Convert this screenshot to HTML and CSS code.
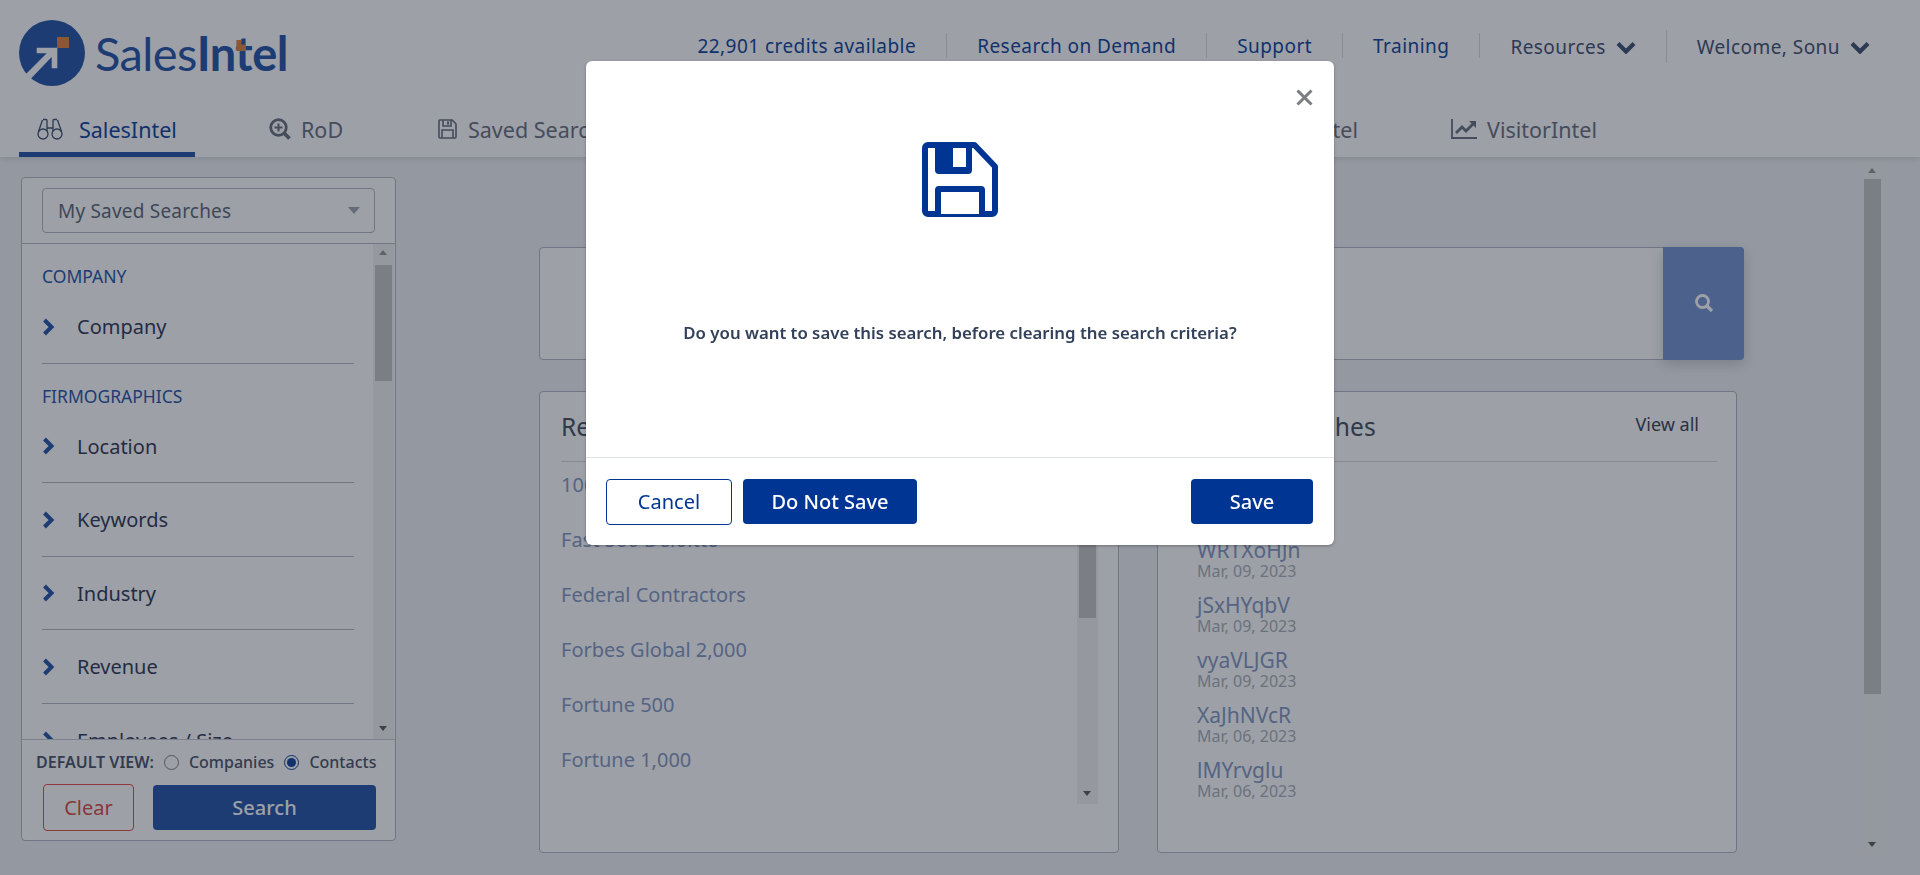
FILE: index.html
```html
<!DOCTYPE html>
<html lang="en">
<head>
    <meta charset="UTF-8">
    <meta name="viewport" content="width=device-width, initial-scale=1.0">
    <title>SalesIntel</title>
    <link rel="stylesheet" href="styles.css">
</head>
<body>
    <!-- header -->
    <header class="header">
        <div class="top-row">
            <a class="logo">
                <svg class="logo-mark" width="66" height="66" viewBox="0 0 66 66">
                    <circle cx="33" cy="33" r="33" fill="#164aa1"/>
                    <rect x="38" y="17" width="12" height="11" fill="#e07a2c"/>
                    <polygon fill="#fff" points="17.7,27.7 38.3,27.7 38.3,48.3 32.7,48.3 32.7,37 11.7,58.7 7,54 27.7,33.3 17.7,33.3"/>
                </svg>
                <span class="logo-text">Sales<b>In<span class="logo-t">t</span>el</b></span>
            </a>
            <nav class="top-nav">
                <a class="top-link">22,901 credits available</a>
                <a class="top-link">Research on Demand</a>
                <a class="top-link">Support</a>
                <a class="top-link">Training</a>
                <a class="top-link top-link-dark top-link-tall">Resources
                    <svg class="nav-caret" width="20" height="13" viewBox="0 0 20 13"><path d="M2 2.500l8 8 8-8" fill="none" stroke="currentColor" stroke-width="4.200"/></svg>
                </a>
                <a class="top-link top-link-dark top-link-tall">Welcome, Sonu
                    <svg class="nav-caret" width="20" height="13" viewBox="0 0 20 13"><path d="M2 2.500l8 8 8-8" fill="none" stroke="currentColor" stroke-width="4.200"/></svg>
                </a>
            </nav>
        </div>
        <div class="tabs">
            <a class="tab tab-active">
                <svg width="26" height="22" viewBox="0 0 26 22" fill="none" stroke="currentColor" stroke-width="1.300">
                    <path d="M6 1.500h3a1 1 0 0 1 1 1V13M20 1.500h-3a1 1 0 0 0-1 1V13M5.500 2L1.500 13.500M20.500 2l4 11.500M10 10h6"/>
                    <circle cx="6" cy="16" r="5"/><circle cx="20" cy="16" r="5"/>
                </svg>
                SalesIntel
            </a>
            <a class="tab tab-rod">
                <svg width="22" height="22" viewBox="0 0 22 22" fill="none" stroke="currentColor" stroke-width="2.800">
                    <circle cx="9.500" cy="9.500" r="7.800"/><path d="M15 15l5.500 5.500" stroke-width="3.800"/><path d="M9.500 5.500v8M5.500 9.500h8" stroke-width="2"/>
                </svg>
                RoD
            </a>
            <a class="tab tab-saved">
                <svg width="19" height="20" viewBox="0 0 19 20" fill="none" stroke="currentColor" stroke-width="1.600">
                    <path d="M1.800 1h12.400L18 5v13a1 1 0 0 1-1 1H2a1 1 0 0 1-1-1V2a1 1 0 0 1 .8-1z"/>
                    <path d="M5 1v6h8V1M4 19v-8h11v8"/><path d="M10 2.500v3" stroke-width="2"/>
                </svg>
                Saved Searches
            </a>
            <a class="tab tab-hidden">TechIntel</a>
            <a class="tab tab-visitor">
                <svg width="26" height="20" viewBox="0 0 26 20" fill="none" stroke="currentColor" stroke-width="2">
                    <path d="M1 0v19h25" stroke-width="1.800"/><path d="M5 14l6-6 4 4 8-8" stroke-width="2.800"/><path d="M18 2h7v7z" fill="currentColor" stroke="none"/>
                </svg>
                VisitorIntel
            </a>
        </div>
    </header>

    <div class="page">
        <!-- left filters -->
        <aside class="sidebar">
            <div class="sidebar-top">
                <div class="select">My Saved Searches<span class="select-arrow"></span></div>
            </div>
            <div class="sidebar-body">
                <div class="filters">
                    <div class="filter-label">COMPANY</div>
                    <div class="filter"><svg class="chev" width="13" height="18" viewBox="0 0 13 18"><path d="M2.500 2l7 7-7 7" fill="none" stroke="currentColor" stroke-width="4"/></svg>Company</div>
                    <div class="filter-label">FIRMOGRAPHICS</div>
                    <div class="filter"><svg class="chev" width="13" height="18" viewBox="0 0 13 18"><path d="M2.500 2l7 7-7 7" fill="none" stroke="currentColor" stroke-width="4"/></svg>Location</div>
                    <div class="filter"><svg class="chev" width="13" height="18" viewBox="0 0 13 18"><path d="M2.500 2l7 7-7 7" fill="none" stroke="currentColor" stroke-width="4"/></svg>Keywords</div>
                    <div class="filter"><svg class="chev" width="13" height="18" viewBox="0 0 13 18"><path d="M2.500 2l7 7-7 7" fill="none" stroke="currentColor" stroke-width="4"/></svg>Industry</div>
                    <div class="filter"><svg class="chev" width="13" height="18" viewBox="0 0 13 18"><path d="M2.500 2l7 7-7 7" fill="none" stroke="currentColor" stroke-width="4"/></svg>Revenue</div>
                    <div class="filter"><svg class="chev" width="13" height="18" viewBox="0 0 13 18"><path d="M2.500 2l7 7-7 7" fill="none" stroke="currentColor" stroke-width="4"/></svg>Employees / Size</div>
                </div>
                <div class="scrollbar">
                    <span class="arrow-up"></span>
                    <span class="thumb thumb-side"></span>
                    <span class="arrow-down"></span>
                </div>
            </div>
            <div class="sidebar-foot">
                <div class="default-view">
                    <span class="default-label">DEFAULT VIEW:</span>
                    <label class="radio"><input type="radio" name="view">Companies</label>
                    <label class="radio"><input type="radio" name="view" checked>Contacts</label>
                </div>
                <div class="foot-btns">
                    <button class="btn-clear">Clear</button>
                    <button class="btn-search">Search</button>
                </div>
            </div>
        </aside>

        <!-- main content -->
        <main class="content">
            <div class="search-box">
                <div class="search-input"></div>
                <button class="search-go">
                    <svg width="20" height="20" viewBox="0 0 20 20" fill="none" stroke="#fff" stroke-width="2.800"><circle cx="8.500" cy="8.500" r="6"/><path d="M13 13l5 5" stroke-width="3.400"/></svg>
                </button>
            </div>
            <div class="cards">
                <section class="card">
                    <div class="card-head"><h2>Recommended Lists</h2></div>
                    <div class="card-row">
                        <ul class="list">
                            <li>100 Best Companies</li>
                            <li>Fast 500 Deloitte</li>
                            <li>Federal Contractors</li>
                            <li>Forbes Global 2,000</li>
                            <li>Fortune 500</li>
                            <li>Fortune 1,000</li>
                        </ul>
                        <div class="scrollbar">
                            <span class="arrow-up"></span>
                            <span class="thumb thumb-list"></span>
                            <span class="arrow-down"></span>
                        </div>
                    </div>
                </section>
                <section class="card">
                    <div class="card-head"><h2>Saved Searches</h2><a class="view-all">View all</a></div>
                    <ul class="recent">
                        <li><a>pKtRmZsA</a><span>Mar, 09, 2023</span></li>
                        <li><a>WRTXoHJn</a><span>Mar, 09, 2023</span></li>
                        <li><a>jSxHYqbV</a><span>Mar, 09, 2023</span></li>
                        <li><a>vyaVLJGR</a><span>Mar, 09, 2023</span></li>
                        <li><a>XaJhNVcR</a><span>Mar, 06, 2023</span></li>
                        <li><a>lMYrvglu</a><span>Mar, 06, 2023</span></li>
                    </ul>
                </section>
            </div>
        </main>

        <div class="scrollbar page-scroll">
            <span class="arrow-up"></span>
            <span class="thumb thumb-page"></span>
            <span class="arrow-down"></span>
        </div>
    </div>

    <!-- save search dialog -->
    <div class="overlay"></div>
    <div class="modal">
        <button class="modal-close">
            <svg width="17" height="17" viewBox="0 0 17 17"><path d="M1.500 1.500l14 14M15.500 1.500l-14 14" stroke="#7a7d82" stroke-width="3" fill="none"/></svg>
        </button>
        <div class="modal-body">
            <svg class="modal-icon" width="76" height="75" viewBox="0 0 76 75">
                <path d="M6 3h46.500L73 24.500V69a3 3 0 0 1-3 3H6a3 3 0 0 1-3-3V6a3 3 0 0 1 3-3z" fill="#fff" stroke="#003594" stroke-width="6" stroke-linejoin="round"/>
                <path d="M13 4h37v24a4 4 0 0 1-4 4H17a4 4 0 0 1-4-4z" fill="#003594"/>
                <rect x="31" y="6" width="13" height="19" fill="#fff"/>
                <path d="M16 72V48a1 1 0 0 1 1-1h42a1 1 0 0 1 1 1v24" fill="#fff" stroke="#003594" stroke-width="6"/>
            </svg>
            <p class="modal-text">Do you want to save this search, before clearing the search criteria?</p>
        </div>
        <div class="modal-foot">
            <button class="btn-cancel">Cancel</button>
            <button class="btn-primary btn-nosave">Do Not Save</button>
            <button class="btn-primary btn-save">Save</button>
        </div>
    </div>
</body>
</html>
```

FILE: styles.css
```css
*{
    margin: 0;
    padding: 0;
    box-sizing: border-box;
}
html,body{
    height: 875px;
    overflow: hidden;
}
body{
    background-color: #eef1f5;
    font-family: "Noto Sans", "Liberation Sans", sans-serif;
    color: #2b3a55;
}
ul{
    list-style: none;
}
button{
    font-family: inherit;
    border: none;
}

/* header */
.header{
    height: 157px;
    background-color: #fff;
    box-shadow: 0 2px 6px rgba(0,0,0,.12);
    position: relative;
}
.top-row{
    height: 108px;
    display: flex;
    justify-content: space-between;
    padding: 20px 50px 0 19px;
}
.logo{
    display: flex;
    align-items: flex-start;
}
.logo-text{
    font-family: "Lato", sans-serif;
    font-size: 47px;
    line-height: 66px;
    margin-left: 10px;
    color: #164aa1;
    letter-spacing: -.6px;
}
.logo-text b{
    font-weight: 700;
}
.logo-t{
    position: relative;
}
.logo-t::after{
    content: "";
    position: absolute;
    left: 1px;
    top: 15px;
    width: 10px;
    height: 11px;
    background-color: #e07a2c;
    clip-path: polygon(0 0, 50% 0, 50% 40%, 100% 40%, 100% 100%, 0 100%);
}
.top-nav{
    display: flex;
    align-items: flex-start;
    height: 33px;
    margin-top: 13px;
}
.top-link{
    display: flex;
    align-items: center;
    height: 25px;
    padding: 0 30px;
    font-size: 19px;
    letter-spacing: .45px;
    white-space: nowrap;
    color: #003594;
    border-right: 1px solid #d8dbe0;
}
.top-link:last-child{
    border-right: none;
    padding-right: 0;
}
.top-link-dark{
    color: #344566;
}
.top-link-tall{
    height: 33px;
    margin-top: -3px;
}
.nav-caret{
    margin-left: 10px;
    margin-top: 2px;
}

/* tabs */
.tabs{
    display: flex;
    height: 49px;
    padding-left: 19px;
}
.tab{
    display: flex;
    align-items: center;
    flex-shrink: 0;
    gap: 10px;
    height: 49px;
    padding-bottom: 7px;
    font-size: 21.500px;
    color: #5f6675;
    white-space: nowrap;
}
.tab svg{
    flex-shrink: 0;
}
.tab-active{
    color: #003594;
    border-bottom: 5px solid #164aa1;
    padding: 0 0 2px 18px;
    gap: 16px;
    width: 176px;
}
.tab-active svg{
    color: #344566;
}
.tab-rod{
    margin-left: 74px;
    width: 169px;
}
.tab-saved{
    width: 300px;
    gap: 11px;
}
.tab-hidden{
    width: 620px;
    justify-content: flex-end;
}
.tab-visitor{
    margin-left: 93px;
}

/* page */
.page{
    display: flex;
    align-items: flex-start;
    height: 718px;
    padding: 20px 0 0 21px;
    position: relative;
}
.sidebar{
    width: 375px;
    height: 664px;
    background-color: #fff;
    border: 1px solid #aeb3bd;
    border-radius: 4px;
    display: flex;
    flex-direction: column;
    flex-shrink: 0;
}
.sidebar-top{
    height: 66px;
    flex-shrink: 0;
    padding: 10px 20px 0 20px;
    border-bottom: 1px solid #aeb3bd;
}
.select{
    height: 45px;
    border: 1px solid #aeb3bd;
    border-radius: 4px;
    padding: 0 15px;
    display: flex;
    align-items: center;
    justify-content: space-between;
    font-size: 19px;
    letter-spacing: .2px;
    color: #535d70;
}
.select-arrow{
    border-left: 6px solid transparent;
    border-right: 6px solid transparent;
    border-top: 7px solid #9aa0aa;
    margin-right: -1px;
}
.sidebar-body{
    display: flex;
    height: 495px;
    flex-shrink: 0;
    overflow: hidden;
}
.filters{
    width: 351px;
    padding: 0 19px 0 20px;
    flex-shrink: 0;
}
.filter-label{
    height: 46px;
    padding-top: 22px;
    line-height: 20px;
    font-size: 17.500px;
    color: #164aa1;
}
.filter{
    height: 73.500px;
    display: flex;
    align-items: center;
    padding-top: 1px;
    font-size: 20px;
    color: #1f2c49;
    border-bottom: 1px solid #aeb3bd;
}
.chev{
    color: #164aa1;
    margin-right: 22px;
    flex-shrink: 0;
}
.sidebar-foot{
    border-top: 1px solid #c4c8d0;
    flex: 1;
    padding: 13px 0 0 14px;
}
.default-view{
    display: flex;
    align-items: center;
    font-size: 16px;
    height: 18px;
    color: #3e4a60;
    font-weight: 500;
}
.default-label{
    font-weight: 600;
    margin-right: 10px;
    white-space: nowrap;
}
.radio{
    display: flex;
    align-items: center;
    margin-right: 10px;
    white-space: nowrap;
}
.radio input{
    width: 15px;
    height: 15px;
    margin: 0 10px 0 0;
    accent-color: #003594;
}
.foot-btns{
    display: flex;
    gap: 19px;
    margin: 13px 0 0 7px;
}
.btn-clear{
    width: 91px;
    height: 47px;
    background-color: #fff;
    border: 1px solid #e0453f;
    border-radius: 4px;
    color: #dc3c3c;
    font-size: 20px;
}
.btn-search{
    width: 223px;
    height: 45px;
    margin-top: 1px;
    background-color: #164aa1;
    border-radius: 4px;
    color: #fff;
    font-size: 20px;
    font-weight: 500;
}

/* fake scrollbars */
.scrollbar{
    width: 21px;
    background-color: #f1f1f1;
    display: flex;
    flex-direction: column;
    align-items: center;
    position: relative;
    flex-shrink: 0;
}
.thumb{
    width: 17px;
    background-color: #c1c1c1;
}
.thumb-side{
    height: 116px;
    margin-top: 21px;
}
.thumb-list{
    height: 142px;
    margin-top: 14px;
}
.thumb-page{
    height: 515px;
    margin-top: 17px;
}
.arrow-up,
.arrow-down{
    position: absolute;
    left: 6px;
    border-left: 4.500px solid transparent;
    border-right: 4.500px solid transparent;
}
.arrow-up{
    top: 6px;
    border-bottom: 5px solid #8e8e8e;
}
.arrow-down{
    bottom: 8px;
    border-top: 5px solid #505050;
}
.page-scroll{
    height: 693px;
    position: absolute;
    left: 1862px;
    top: 5px;
}

/* content */
.content{
    margin-left: 143px;
    width: 1205px;
    display: flex;
    flex-direction: column;
    padding-top: 70px;
}
.search-box{
    height: 113px;
    display: flex;
    background-color: #fff;
    border: 1px solid #aeb3bd;
    border-radius: 4px;
}
.search-input{
    flex: 1;
}
.search-go{
    width: 81px;
    margin: -1px;
    padding-top: 3px;
    background-color: #6d8ccf;
    border-radius: 0 4px 4px 0;
    box-shadow: 0 4px 14px rgba(0,0,0,.2);
}
.cards{
    display: flex;
    gap: 38px;
    margin-top: 31px;
}
.card{
    width: 580px;
    height: 462px;
    background-color: #fff;
    border: 1px solid #aeb3bd;
    border-radius: 4px;
    padding: 0 20px 0 21px;
}
.card + .card{
    padding: 0 19px 0 39px;
}
.card-head{
    height: 70px;
    border-bottom: 1px solid #d5d8de;
    display: flex;
    justify-content: space-between;
}
.card-head h2{
    font-size: 24.600px;
    font-weight: 400;
    line-height: 34px;
    padding-top: 18px;
    color: #3a4455;
    white-space: nowrap;
}
.view-all{
    font-size: 18px;
    line-height: 24px;
    padding-top: 20px;
    margin-right: 18px;
    color: #2d3648;
}
.card-row{
    display: flex;
    justify-content: space-between;
    height: 342px;
}
.list li{
    height: 55px;
    padding-top: 10px;
    line-height: 26px;
    font-size: 20px;
    color: #7d92bd;
}
.recent{
    padding-top: 22px;
}
.recent li{
    height: 55px;
}
.recent a{
    display: block;
    line-height: 22px;
    font-size: 21px;
    color: #7d92bd;
}
.recent span{
    display: block;
    line-height: 20px;
    font-size: 16px;
    color: #a6abb3;
}

/* dialog */
.overlay{
    position: fixed;
    top: 0;
    left: 0;
    width: 100%;
    height: 100%;
    background-color: rgba(38,44,60,.45);
}
.modal{
    position: fixed;
    left: 586px;
    top: 61px;
    width: 748px;
    height: 484px;
    background-color: #fff;
    border-radius: 6px;
    box-shadow: 0 1px 3px rgba(0,0,0,.3);
    display: flex;
    flex-direction: column;
}
.modal-close{
    position: absolute;
    right: 21px;
    top: 28px;
    width: 17px;
    height: 17px;
    background: none;
}
.modal-body{
    height: 397px;
    border-bottom: 1px solid #dfe3ea;
    display: flex;
    flex-direction: column;
    align-items: center;
    padding-top: 81px;
}
.modal-text{
    margin-top: 104px;
    font-size: 16.800px;
    line-height: 24px;
    font-weight: 600;
    color: #33405a;
}
.modal-foot{
    display: flex;
    align-items: center;
    gap: 11px;
    flex: 1;
    padding: 0 21px 0 20px;
}
.btn-cancel{
    width: 126px;
    height: 46px;
    background-color: #fff;
    border: 1px solid #003594;
    border-radius: 4px;
    color: #003594;
    font-size: 20px;
}
.btn-primary{
    height: 45px;
    background-color: #003594;
    border-radius: 4px;
    color: #fff;
    font-size: 20px;
    font-weight: 500;
}
.btn-nosave{
    width: 174px;
}
.btn-save{
    width: 122px;
    margin-left: auto;
}
```
